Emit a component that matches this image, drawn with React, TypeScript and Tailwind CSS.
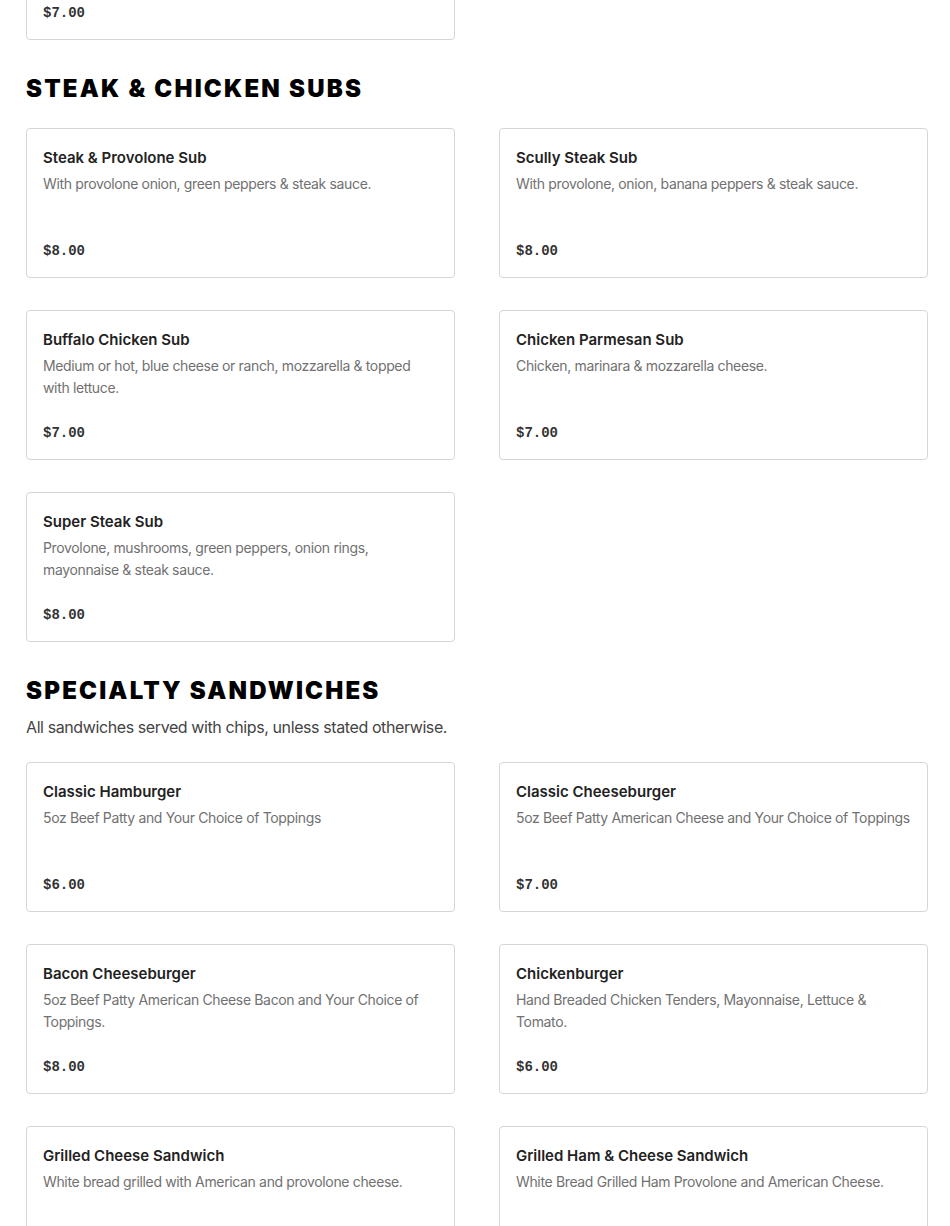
type Item = { name: string; desc: string; price: string }

const steakSubs: Item[] = [
  { name: 'Steak & Provolone Sub', desc: 'With provolone onion, green peppers & steak sauce.', price: '$8.00' },
  { name: 'Scully Steak Sub', desc: 'With provolone, onion, banana peppers & steak sauce.', price: '$8.00' },
  { name: 'Buffalo Chicken Sub', desc: 'Medium or hot, blue cheese or ranch, mozzarella & topped with lettuce.', price: '$7.00' },
  { name: 'Chicken Parmesan Sub', desc: 'Chicken, marinara & mozzarella cheese.', price: '$7.00' },
  { name: 'Super Steak Sub', desc: 'Provolone, mushrooms, green peppers, onion rings, mayonnaise & steak sauce.', price: '$8.00' },
]

const sandwiches: Item[] = [
  { name: 'Classic Hamburger', desc: '5oz Beef Patty and Your Choice of Toppings', price: '$6.00' },
  { name: 'Classic Cheeseburger', desc: '5oz Beef Patty American Cheese and Your Choice of Toppings', price: '$7.00' },
  { name: 'Bacon Cheeseburger', desc: '5oz Beef Patty American Cheese Bacon and Your Choice of Toppings.', price: '$8.00' },
  { name: 'Chickenburger', desc: 'Hand Breaded Chicken Tenders, Mayonnaise, Lettuce & Tomato.', price: '$6.00' },
  { name: 'Grilled Cheese Sandwich', desc: 'White bread grilled with American and provolone cheese.', price: '$5.00' },
  { name: 'Grilled Ham & Cheese Sandwich', desc: 'White Bread Grilled Ham Provolone and American Cheese.', price: '$6.00' },
]

function Card({ item }: { item: Item }) {
  return (
    <div className="h-[150px] rounded-[4px] border border-[#d6d6d6] bg-white px-[16px] pt-[18px] pb-[15px] flex flex-col">
      <h3 className="text-[15px] leading-[22px] font-semibold text-[#222]">{item.name}</h3>
      <p className="mt-[4px] text-[14px] leading-[22px] tracking-tight text-[#717171]">{item.desc}</p>
      <div className="mt-auto text-[14px] leading-[22px] font-bold text-[#333] font-['Liberation_Mono',monospace]">
        {item.price}
      </div>
    </div>
  )
}

function Section({ title, note, items }: { title: string; note?: string; items: Item[] }) {
  return (
    <section className="mt-[33px]">
      <h2 className="text-[24px] leading-[32px] font-black uppercase tracking-[2.2px] text-black">{title}</h2>
      {note && <p className="mt-[8px] text-[16px] leading-[24px] tracking-tight text-[#444]">{note}</p>}
      <div className="mt-[23px] grid grid-cols-2 gap-x-[44px] gap-y-[32px]">
        {items.map((it) => (
          <Card key={it.name} item={it} />
        ))}
      </div>
    </section>
  )
}

export default function App() {
  return (
    <div className="min-h-screen bg-white pl-[26px] pr-[22px] pb-10 font-['Inter',sans-serif] overflow-hidden">
      <div className="-mt-[110px] grid grid-cols-2 gap-x-[44px]">
        <Card item={{ name: 'Italian Sub', desc: 'Ham, salami, provolone, lettuce, tomato & Italian dressing.', price: '$7.00' }} />
      </div>
      <Section title="Steak & Chicken Subs" items={steakSubs} />
      <Section title="Specialty Sandwiches" note="All sandwiches served with chips, unless stated otherwise." items={sandwiches} />
    </div>
  )
}
